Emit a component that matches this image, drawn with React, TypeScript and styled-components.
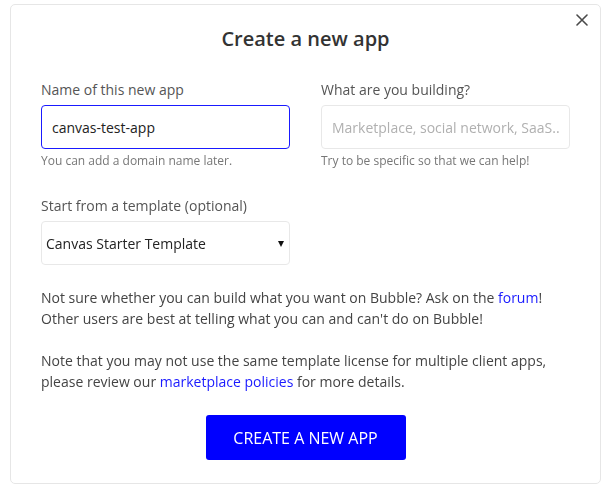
import React, { useState } from "react";
import styled, { createGlobalStyle } from "styled-components";

const Global = createGlobalStyle`
  html, body { margin: 0; padding: 0; background: #ffffff; }
  body { font-family: "Open Sans", "Noto Sans", Arial, sans-serif; }
  * { box-sizing: border-box; }
`;

const Card = styled.div`
  position: relative;
  margin: 4px 2px 0 10px;
  width: 591px;
  height: 480px;
  border: 1px solid #e6e6e6;
  border-radius: 5px;
  background: #fff;
  padding: 20px 30px 0 30px;
  display: flex;
  flex-direction: column;
`;

const CloseButton = styled.button`
  position: absolute;
  top: 5px;
  right: 8px;
  width: 20px;
  height: 20px;
  padding: 0;
  border: none;
  background: transparent;
  display: flex;
  align-items: center;
  justify-content: center;
  cursor: pointer;
`;

const Title = styled.h2`
  margin: 0;
  font-size: 20px;
  line-height: 28px;
  font-weight: 600;
  color: #333;
  text-align: center;
`;

const Grid = styled.div`
  margin-top: 27px;
  display: grid;
  grid-template-columns: 249px 249px;
  column-gap: 31px;
  row-gap: 27px;
`;

const Field = styled.div`
  display: flex;
  flex-direction: column;
`;

const Label = styled.label`
  font-size: 14px;
  line-height: 20px;
  color: #555;
  margin-bottom: 5px;
`;

const TextInput = styled.input<{ $active?: boolean }>`
  height: 44px;
  width: 100%;
  border: 1px solid ${(p) => (p.$active ? "#1a1aff" : "#e8e8e8")};
  border-radius: 4px;
  padding: 0 10px;
  font-family: inherit;
  font-size: 14px;
  color: #222;
  outline: none;
  background: #fff;
  caret-color: #222;
  &::placeholder { color: #b0b0b0; }
`;

const Help = styled.div`
  margin-top: 4px;
  font-size: 12px;
  line-height: 16px;
  color: #777;
`;

const SelectWrap = styled.div`
  position: relative;
  &::after {
    content: "";
    position: absolute;
    right: 6px;
    top: 20px;
    border-left: 3.5px solid transparent;
    border-right: 3.5px solid transparent;
    border-top: 6px solid #111;
    pointer-events: none;
  }
`;

const Select = styled.select`
  appearance: none;
  -webkit-appearance: none;
  width: 100%;
  height: 44px;
  border: 1px solid #e8e8e8;
  border-radius: 4px;
  padding: 0 20px 0 4px;
  font-family: inherit;
  font-size: 14px;
  color: #222;
  background: #fff;
  outline: none;
`;

const Text = styled.p<{ $first?: boolean }>`
  margin: ${(p) => (p.$first ? "22px" : "21px")} 0 0 0;
  font-size: 14px;
  line-height: 21px;
  color: #444;
`;

const Link = styled.a`
  color: #1a1aff;
  text-decoration: none;
`;

const ButtonRow = styled.div`
  margin-top: 23px;
  display: flex;
  justify-content: center;
`;

const PrimaryButton = styled.button`
  width: 200px;
  height: 45px;
  border: none;
  border-radius: 3px;
  background: #0000ff;
  color: #fff;
  font-family: inherit;
  font-size: 16px;
  text-transform: uppercase;
  cursor: pointer;
`;

export default function App() {
  const [name, setName] = useState("canvas-test-app");
  const [what, setWhat] = useState("");
  const [tpl, setTpl] = useState("canvas");
  return (
    <>
      <Global />
      <Card>
        <CloseButton aria-label="Close">
          <svg width="12" height="12" viewBox="0 0 12 12">
            <path d="M1 1 L11 11 M11 1 L1 11" stroke="#4a4a4a" strokeWidth="1.6" strokeLinecap="round" />
          </svg>
        </CloseButton>
        <Title>Create a new app</Title>
        <Grid>
          <Field>
            <Label>Name of this new app</Label>
            <TextInput $active autoFocus value={name} onChange={(e) => setName(e.target.value)} />
            <Help>You can add a domain name later.</Help>
          </Field>
          <Field>
            <Label>What are you building?</Label>
            <TextInput
              placeholder="Marketplace, social network, SaaS..."
              value={what}
              onChange={(e) => setWhat(e.target.value)}
            />
            <Help>Try to be specific so that we can help!</Help>
          </Field>
          <Field>
            <Label>Start from a template (optional)</Label>
            <SelectWrap>
              <Select value={tpl} onChange={(e) => setTpl(e.target.value)}>
                <option value="canvas">Canvas Starter Template</option>
                <option value="none">No template</option>
              </Select>
            </SelectWrap>
          </Field>
        </Grid>
        <Text $first>
          Not sure whether you can build what you want on Bubble? Ask on the <Link href="#">forum</Link>!
          <br />
          Other users are best at telling what you can and can't do on Bubble!
        </Text>
        <Text>
          Note that you may not use the same template license for multiple client apps,
          <br />
          please review our <Link href="#">marketplace policies</Link> for more details.
        </Text>
        <ButtonRow>
          <PrimaryButton>Create a new app</PrimaryButton>
        </ButtonRow>
      </Card>
    </>
  );
}
